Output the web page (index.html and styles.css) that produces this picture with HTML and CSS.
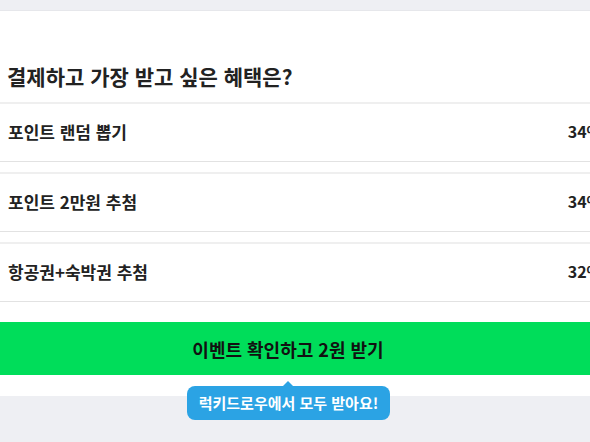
FILE: index.html
```html
<!DOCTYPE html>
<html lang="ko">
<head>
<meta charset="utf-8">
<link rel="stylesheet" href="styles.css">
</head>
<body>
<div class="page">
  <div class="top-band"></div>
  <section class="card">
    <h2 class="title">결제하고 가장 받고 싶은 혜택은?</h2>
    <ul class="options">
      <li class="option"><span class="label">포인트 랜덤 뽑기</span><span class="pct">34%</span></li>
      <li class="option"><span class="label">포인트 2만원 추첨</span><span class="pct">34%</span></li>
      <li class="option"><span class="label">항공권+숙박권 추첨</span><span class="pct">32%</span></li>
    </ul>
    <div class="cta-wrap">
      <button class="cta">이벤트 확인하고 2원 받기</button>
      <div class="tip">럭키드로우에서 모두 받아요!</div>
    </div>
  </section>
  <div class="bottom-band"></div>
</div>
</body>
</html>
```
FILE: styles.css
```css
html, body {
  margin: 0;
  padding: 0;
  background: #eeeff3;
  overflow: hidden;
}
body {
  width: 590px;
  height: 442px;
  font-family: "Noto Sans CJK KR", "Noto Sans", sans-serif;
  color: #222;
}
.page {
  display: flex;
  flex-direction: column;
}
.top-band {
  height: 10px;
  background: #eeeff3;
  border-bottom: 1px solid #e6e7eb;
}
.card {
  background: #fff;
  height: 385px;
  position: relative;
}
.title {
  margin: 0;
  padding: 50px 0 0 7px;
  height: 91px;
  box-sizing: border-box;
  font-size: 21px;
  font-weight: 700;
  line-height: 30px;
  color: #222;
}
.options {
  list-style: none;
  margin: 0;
  padding: 0;
  width: 610px;
  display: flex;
  flex-direction: column;
  gap: 10px;
}
.option {
  display: flex;
  justify-content: space-between;
  align-items: center;
  height: 60px;
  box-sizing: border-box;
  padding: 0 8px 3px 8px;
  border-top: 2px solid #efefef;
  border-bottom: 1px solid #e2e2e2;
  font-size: 17px;
  font-weight: 700;
  color: #222;
}
.option .pct {
  font-size: 16px;
}
.cta-wrap {
  margin-top: 20px;
  position: relative;
}
.cta {
  display: block;
  width: 100%;
  height: 53px;
  border: 0;
  margin: 0;
  padding: 0 14px 0 0;
  background: #00dd5a;
  font-family: inherit;
  font-size: 18px;
  font-weight: 700;
  color: #111;
}
.tip {
  position: absolute;
  left: 187px;
  top: 64px;
  width: 203px;
  height: 34px;
  box-sizing: border-box;
  background: #2ba3e4;
  border-radius: 8px;
  color: #fff;
  font-size: 15px;
  font-weight: 700;
  line-height: 34px;
  text-align: center;
  z-index: 2;
}
.tip::before {
  content: "";
  position: absolute;
  left: 95px;
  top: -5px;
  border-left: 6px solid transparent;
  border-right: 6px solid transparent;
  border-bottom: 6px solid #2ba3e4;
}
.bottom-band {
  height: 46px;
  background: #eeeff3;
}
```
